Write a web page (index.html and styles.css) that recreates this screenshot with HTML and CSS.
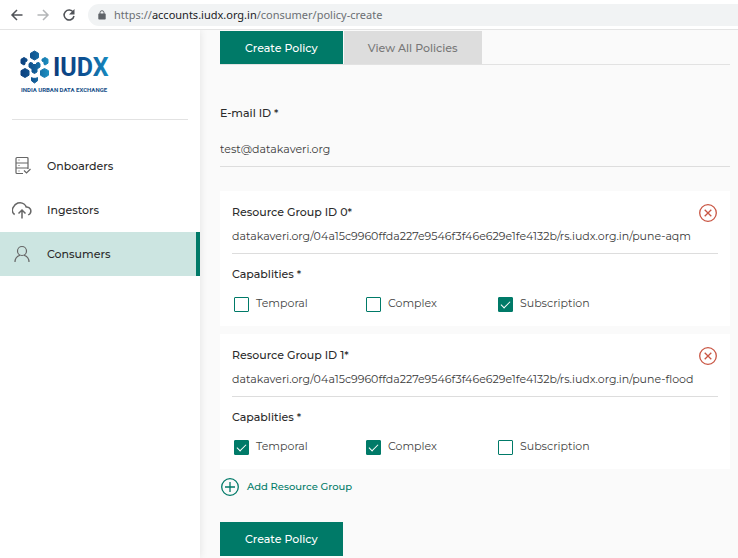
FILE: index.html
```html
<!DOCTYPE html>
<html lang="en">
<head>
<meta charset="utf-8">
<title>Create Policy</title>
<link rel="stylesheet" href="styles.css">
</head>
<body>
<header class="browser">
  <button class="nav-button" aria-label="Back"><svg width="14" height="14" viewBox="0 0 14 14"><path d="M12.5 7H2M7 2L2 7l5 5"/></svg></button>
  <button class="nav-button disabled" aria-label="Forward"><svg width="14" height="14" viewBox="0 0 14 14"><path d="M1.500 7H12M7 2l5 5-5 5"/></svg></button>
  <button class="nav-button" aria-label="Reload"><svg width="14" height="14" viewBox="0 0 14 14"><path d="M11.300 4.300A5 5 0 1 0 12 8"/><path class="solid" d="M12.500 1v5.500H7z"/></svg></button>
  <div class="address">
    <svg width="8" height="10" viewBox="0 0 8 10"><path d="M2 4V2.700a2 2 0 0 1 4 0V4" fill="none" stroke="#5f6368"/><rect x=".3" y="3.600" width="7.400" height="6" rx=".8" fill="#5f6368"/></svg>
    <span>https://<span class="host">accounts.iudx.org.in</span>/consumer/policy-create</span>
  </div>
</header>
<div class="app">
  <aside class="sidebar">
    <div class="brand">
      <svg class="logo" width="100" height="46" viewBox="0 0 100 46" role="img" aria-label="IUDX India Urban Data Exchange">
        <defs>
          <linearGradient id="mark" gradientUnits="userSpaceOnUse" x1="0" y1="0" x2="29" y2="0"><stop offset="0" stop-color="#0c3f7e"/><stop offset=".5" stop-color="#125c97"/><stop offset="1" stop-color="#1c91c2"/></linearGradient>
          <linearGradient id="word" gradientUnits="userSpaceOnUse" x1="34" y1="0" x2="90" y2="0"><stop offset="0" stop-color="#0b3d7c"/><stop offset=".55" stop-color="#0d5294"/><stop offset="1" stop-color="#168fc4"/></linearGradient>
        </defs>
        <g fill="url(#mark)" stroke="url(#mark)" stroke-linejoin="round">
          <path d="M14.500 2l4 2.300v4.400l-4 2.300-4-2.300V4.300z"/>
          <path d="M4 8.500l3 1.700v1.800L5 13.200v2L4 16l-3-1.700v-4z"/>
          <path d="M25 8.500l3 1.700v4L25 16l-1-.7v-2L22 12v-1.800z"/>
          <path d="M5 19.500l4 2.200v4.500l-4 2.300-4-2.300v-4.500z"/>
          <path d="M24.500 19.500l4 2.200v4.500l-4 2.300-4-2.300v-4.500z"/>
          <path d="M10 13.500l2.500.5v1.500h4V14l2.500-.5 1 1.500v3l-3 2v3l-2.500 1.500L12 23v-3l-3-2v-3z"/>
          <path d="M11.500 28.500l1.500.8h3l1.500-.8v3.300L14.500 34l-3-2.200z"/>
        </g>
        <text class="logo-word" x="33" y="27" fill="url(#word)">IUDX</text>
        <text class="logo-tag" x="1" y="43">INDIA URBAN DATA EXCHANGE</text>
      </svg>
    </div>
    <nav class="menu">
      <a href="#"><svg width="20" height="20" viewBox="0 0 20 20"><path d="M16 13V2.500q0-1-1-1H5q-1 0-1 1v14q0 1 1 1h6M4 7h12M4 12h12M12 14.500l2.500 2.500 4-4M6.500 4h1M6.500 9.500h1M6.500 15h1"/></svg>Onboarders</a>
      <a href="#"><svg width="20" height="20" viewBox="0 0 20 20"><path class="thick" d="M2.700 14.500A5 5 0 0 1 1.500 7C3 3.500 8 1 12 4c1.300 1 2 2 2.200 3 4-.5 6 4 3.500 7l-1.500 1M10 18.500v-8M6.500 13.500l3.500-3.500 3.500 3.500"/></svg>Ingestors</a>
      <a href="#" class="active"><svg width="20" height="20" viewBox="0 0 20 20"><circle cx="10" cy="7" r="4.500"/><path d="M3 18c0-4 2.500-6 5-6.800M12 11.200c2.500.8 5 2.800 5 6.800"/></svg>Consumers</a>
    </nav>
  </aside>
  <main class="content">
    <div class="tabs">
      <button class="tab selected">Create Policy</button>
      <button class="tab">View All Policies</button>
    </div>
    <form>
      <div class="field email">
        <label for="email">E-mail ID *</label>
        <input id="email" type="text" value="test@datakaveri.org">
      </div>
      <section class="card">
        <div class="field">
          <label for="rg0">Resource Group ID 0*</label>
          <input id="rg0" type="text" value="datakaveri.org/04a15c9960ffda227e9546f3f46e629e1fe4132b/rs.iudx.org.in/pune-aqm">
        </div>
        <button type="button" class="remove" aria-label="Remove resource group 0"><svg width="20" height="20" viewBox="0 0 20 20"><circle cx="10" cy="10" r="8.300"/><path d="M6.700 6.700l6.600 6.600M13.300 6.700l-6.600 6.600"/></svg></button>
        <fieldset>
          <legend>Capablities *</legend>
          <div class="options">
            <label><input type="checkbox">Temporal</label>
            <label><input type="checkbox">Complex</label>
            <label><input type="checkbox" checked>Subscription</label>
          </div>
        </fieldset>
      </section>
      <section class="card">
        <div class="field">
          <label for="rg1">Resource Group ID 1*</label>
          <input id="rg1" type="text" value="datakaveri.org/04a15c9960ffda227e9546f3f46e629e1fe4132b/rs.iudx.org.in/pune-flood">
        </div>
        <button type="button" class="remove" aria-label="Remove resource group 1"><svg width="20" height="20" viewBox="0 0 20 20"><circle cx="10" cy="10" r="8.300"/><path d="M6.700 6.700l6.600 6.600M13.300 6.700l-6.600 6.600"/></svg></button>
        <fieldset>
          <legend>Capablities *</legend>
          <div class="options">
            <label><input type="checkbox" checked>Temporal</label>
            <label><input type="checkbox" checked>Complex</label>
            <label><input type="checkbox">Subscription</label>
          </div>
        </fieldset>
      </section>
      <button type="button" class="add"><svg width="20" height="20" viewBox="0 0 20 20"><circle cx="10" cy="10" r="8.300"/><path d="M10 5v10M5 10h10"/></svg>Add Resource Group</button>
      <button type="button" class="submit">Create Policy</button>
    </form>
  </main>
</div>
</body>
</html>
```
FILE: styles.css
```css
* {
  box-sizing: border-box;
}

body {
  margin: 0;
  min-height: 100vh;
  display: flex;
  flex-direction: column;
  background: #fafafa;
  color: #2b2b2b;
  font: 11px/20px Montserrat, Inter, sans-serif;
}

button,
input {
  font: inherit;
  color: inherit;
}

button {
  border: 0;
  padding: 0;
  background: none;
}

svg {
  display: block;
  flex: none;
}

.browser {
  display: flex;
  align-items: center;
  gap: 12px;
  height: 30px;
  padding-left: 10px;
  background: #fff;
  border-bottom: 1px solid #e4e4e4;
}

.nav-button svg {
  fill: none;
  stroke: #505358;
  stroke-width: 1.500;
}

.nav-button.disabled svg {
  stroke: #b4b6b8;
}

.nav-button .solid {
  fill: #505358;
  stroke: none;
}

.address {
  flex: 1;
  display: flex;
  align-items: center;
  gap: 8px;
  height: 22px;
  padding-left: 10px;
  border-radius: 11px 0 0 11px;
  background: #f1f3f4;
  color: #6b6f73;
  font: 11px/22px "Noto Sans", sans-serif;
}

.host {
  color: #202124;
}

.app {
  flex: 1;
  display: flex;
}

.sidebar {
  flex: none;
  width: 200px;
  background: #fff;
  box-shadow: 0 0 8px rgba(0, 0, 0, .1);
  clip-path: inset(0 -12px 0 0);
}

.brand {
  height: 90px;
  margin: 0 12px 24px;
  padding: 19px 0 0 8px;
  border-bottom: 1px solid #e2e2e2;
}

.logo-word {
  font: 700 25px Roboto, sans-serif;
}

.logo-tag {
  font: 700 6px Roboto, sans-serif;
  fill: #174f89;
}

.menu a {
  display: flex;
  align-items: center;
  gap: 15px;
  height: 44px;
  padding-left: 12px;
  color: #2b2b2b;
  font-weight: 500;
  text-decoration: none;
}

.menu svg {
  fill: none;
  stroke: #666;
  stroke-width: 1.200;
}

.menu .thick {
  stroke-width: 1.500;
}

.menu .active {
  background: #cce5e1;
  border-right: 4px solid #007a68;
}

.content {
  flex: 1;
  min-width: 0;
  padding: 1px 8px 0 20px;
}

.tabs {
  display: flex;
  gap: 1px;
  margin-bottom: 38px;
  border-bottom: 1px solid #e2e2e2;
}

.tab {
  padding: 0 24px;
  height: 33px;
  background: #ddd;
  color: #777;
  font-weight: 500;
}

.tab.selected,
.submit {
  padding: 0 25px;
  background: #007a68;
  color: #fff;
  font-weight: 500;
}

.field label,
legend {
  display: block;
  padding: 0;
  font-weight: 500;
}

.field input {
  display: block;
  width: 100%;
  height: 32px;
  padding: 0 0 3px;
  border: 0;
  border-bottom: 1px solid #ddd;
  background: none;
  color: #3a3a3a;
}

.email {
  margin-bottom: 24px;
}

.email input {
  margin-top: 12px;
}

.card {
  position: relative;
  margin-bottom: 8px;
  padding: 11px 12px 13px;
  background: #fff;
}

.remove {
  position: absolute;
  top: 12px;
  right: 12px;
}

.remove svg,
.add svg {
  fill: none;
  stroke: #c95644;
  stroke-width: 1.300;
}

fieldset {
  margin: 10px 0 0;
  padding: 9px 0 0;
  border: 0;
}

.options {
  display: grid;
  grid-template-columns: repeat(3, 132px);
  color: #444;
}

.options label {
  display: flex;
  gap: 7px;
  padding-left: 2px;
}

.options input {
  appearance: none;
  display: grid;
  place-items: center;
  width: 15px;
  height: 15px;
  margin: 4px 0 0;
  border: 1px solid #007a68;
  border-radius: 1px;
  background: #fff;
}

.options input:checked {
  background: #007a68;
}

.options input:checked::after {
  content: "";
  width: 8px;
  height: 4px;
  margin-bottom: 2px;
  border: solid #fff;
  border-width: 0 0 1px 1px;
  transform: rotate(-45deg);
}

.add {
  display: flex;
  align-items: center;
  gap: 7px;
  color: #007a68;
  font-weight: 500;
  font-size: 10px;
}

.add svg {
  stroke: #007a68;
}

.submit {
  display: block;
  height: 34px;
  margin-top: 25px;
}
```
